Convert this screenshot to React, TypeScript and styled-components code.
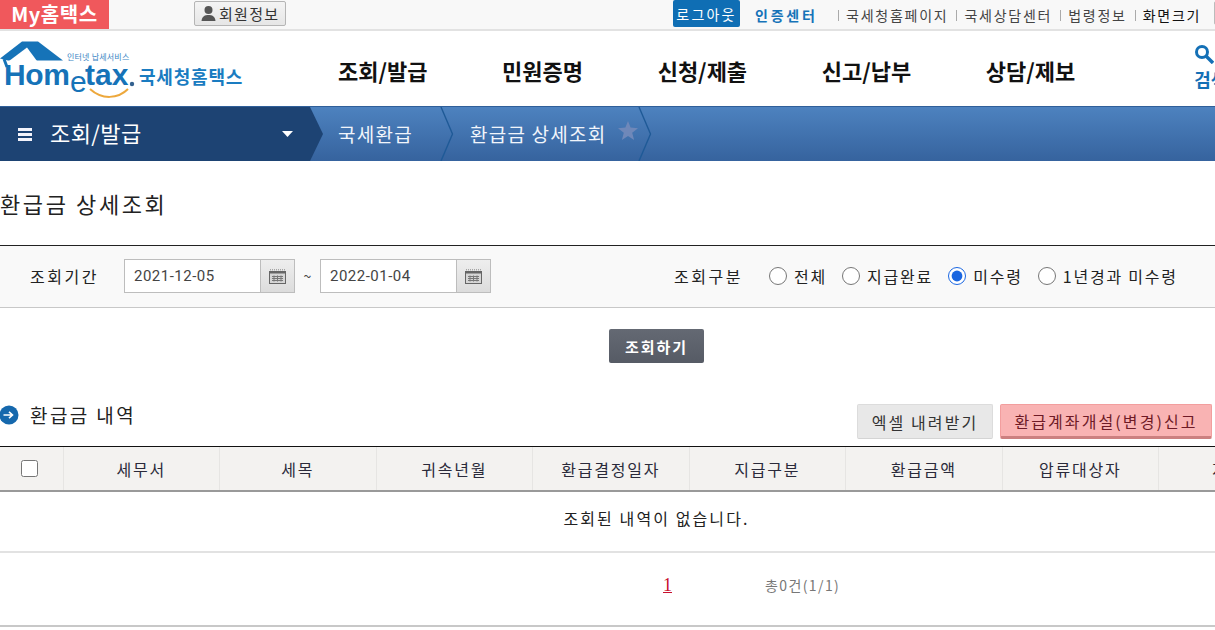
import styled, { createGlobalStyle } from "styled-components";

const GlobalStyle = createGlobalStyle`
  html, body {
    margin: 0;
    padding: 0;
    background: #fff;
    overflow: hidden;
  }
  body {
    font-family: "Noto Sans CJK KR", "Noto Sans", sans-serif;
    color: #222;
  }
  * {
    box-sizing: border-box;
  }
`;

const Viewport = styled.div`
  width: 1215px;
  height: 630px;
  overflow: hidden;
`;

const TopBar = styled.div`
  display: flex;
  align-items: flex-start;
  width: 1313px;
  height: 31px;
  background: #f8f8f8;
  border-bottom: 2px solid #e2e2e2;
`;

const MyHometax = styled.a`
  width: 109px;
  height: 29px;
  background: #f0585c;
  color: #fff;
  font-size: 20px;
  font-weight: 700;
  line-height: 27px;
  text-align: center;
  letter-spacing: 0.6px;
`;

const MemberButton = styled.button`
  display: flex;
  align-items: center;
  gap: 2px;
  width: 92px;
  height: 25px;
  margin: 1px 0 0 85px;
  padding: 0 0 0 5px;
  background: linear-gradient(#f4f4f4, #e6e6e6);
  border: 1px solid #b5b5b5;
  border-radius: 2px;
  color: #333;
  font-family: inherit;
  font-size: 15px;
  letter-spacing: 1.3px;
`;

const LogoutButton = styled.a`
  width: 67px;
  height: 27px;
  margin-left: 387px;
  background: #0f6eb4;
  border-radius: 2px;
  color: #fff;
  font-size: 14px;
  line-height: 28px;
  text-align: center;
  letter-spacing: 2.2px;
  white-space: nowrap;
`;

const CertLink = styled.a`
  width: 62px;
  margin-left: 15px;
  color: #1673b8;
  font-size: 14px;
  font-weight: 700;
  line-height: 30px;
  letter-spacing: 2.8px;
  white-space: nowrap;
`;

const UtilList = styled.div`
  display: flex;
  margin-left: 21px;
`;

const UtilLink = styled.a<{ $dark?: boolean }>`
  display: flex;
  align-items: center;
  height: 30px;
  margin-right: 8px;
  color: ${(p) => (p.$dark ? "#111" : "#444")};
  font-size: 14px;
  letter-spacing: 1.75px;
  white-space: nowrap;

  &::before {
    content: "";
    width: 1px;
    height: 11px;
    margin-right: 7px;
    background: #aaa;
  }
`;

const TopEdgeButton = styled.span`
  width: 20px;
  height: 24px;
  margin: 1px 0 0 5px;
  background: #efefef;
  border: 1px solid #bbb;
  border-radius: 2px;
`;

const Header = styled.header`
  display: flex;
  align-items: center;
  width: 1313px;
  height: 75px;
  background: #fff;
`;

const LogoWrap = styled.a`
  display: flex;
  align-items: center;
  width: 338px;
  height: 75px;
`;

const LogoName = styled.span`
  margin: 14px 0 0 -1px;
  color: #1a7cc1;
  font-size: 18px;
  font-weight: 700;
  letter-spacing: 0.8px;
  white-space: nowrap;
`;

const Menu = styled.nav`
  display: flex;
  gap: 74.6px;
  margin-top: 3px;
`;

const MenuItem = styled.a`
  color: #111;
  font-size: 22px;
  font-weight: 700;
  letter-spacing: 0;
  white-space: nowrap;
`;

const SearchLink = styled.a`
  display: flex;
  flex-direction: column;
  gap: 5px;
  margin: 0 0 5px 119px;
  color: #1470b6;
  font-size: 18px;
  font-weight: 700;
  line-height: 20px;
  white-space: nowrap;
`;

const CrumbBar = styled.div`
  display: flex;
  width: 1313px;
  height: 55px;
  background: linear-gradient(#4d82bf, #36639e);
  border-top: 1px solid #2f5f99;
`;

const CurrentMenu = styled.div`
  display: flex;
  align-items: center;
  width: 323px;
  height: 54px;
  padding-left: 18px;
  background: #1d4373;
  clip-path: polygon(0 0, 310px 0, 323px 50%, 310px 100%, 0 100%);
  color: #fff;
  font-size: 22px;
`;

const MenuLabel = styled.span`
  width: 232px;
  margin: -4px 0 0 18px;
  letter-spacing: 0.4px;
`;

const Crumb = styled.div<{ $pad: number }>`
  display: flex;
  align-items: center;
  padding-left: ${(p) => p.$pad}px;
  color: #f1f5fb;
  font-size: 19px;
  letter-spacing: 1.25px;
  white-space: nowrap;
`;

const CrumbText = styled.span<{ $gap?: number }>`
  margin: -1px ${(p) => p.$gap ?? 0}px 0 0;
`;

const Star = styled.svg`
  margin: -8px 0 0 11px;
  fill: #6f88b9;
`;

const Content = styled.main`
  width: 1313px;
`;

const PageTitle = styled.h1`
  height: 84px;
  margin: 0;
  color: #222;
  font-size: 22px;
  font-weight: 400;
  line-height: 85px;
  letter-spacing: 2.6px;
`;

const SearchPanel = styled.section`
  display: flex;
  align-items: center;
  height: 63px;
  padding: 0 0 1px 30px;
  background: #f9f9f9;
  border-top: 1px solid #222;
  border-bottom: 1px solid #c8c8c8;
`;

const FieldLabel = styled.span<{ $width: number }>`
  width: ${(p) => p.$width}px;
  color: #222;
  font-size: 16px;
  letter-spacing: 2.5px;
  white-space: nowrap;
`;

const DateField = styled.div`
  display: flex;
  height: 34px;
`;

const DateInput = styled.input`
  width: 137px;
  height: 34px;
  padding: 0 0 0 9px;
  background: #fff;
  border: 1px solid #bdbdbd;
  color: #444;
  font-family: "Roboto", "Noto Sans", sans-serif;
  font-size: 15px;
  letter-spacing: 0.5px;
  outline: none;
`;

const CalendarButton = styled.button`
  display: flex;
  align-items: center;
  justify-content: center;
  width: 35px;
  height: 34px;
  margin-left: -1px;
  padding: 0;
  background: linear-gradient(#eeeeee, #dcdcdc);
  border: 1px solid #bdbdbd;
`;

const Tilde = styled.span`
  width: 25px;
  color: #444;
  font-size: 14px;
  text-align: center;
`;

const RadioGroup = styled.div`
  display: flex;
  margin-left: 183px;
`;

const RadioLabel = styled.label`
  display: flex;
  align-items: center;
  margin-right: 15px;
  color: #222;
  font-size: 16px;
  letter-spacing: 1.8px;
  white-space: nowrap;
`;

const RadioInput = styled.input`
  width: 18px;
  height: 18px;
  margin: 0 7px 0 0;
  accent-color: #1a66e0;
`;

const SubmitRow = styled.div`
  display: flex;
  justify-content: center;
  padding-top: 21px;
`;

const SubmitButton = styled.button`
  width: 95px;
  height: 34px;
  padding: 0;
  background: linear-gradient(#646973, #565b65);
  border: 0;
  border-radius: 2px;
  color: #fff;
  font-family: inherit;
  font-size: 15px;
  font-weight: 700;
  letter-spacing: 2px;
`;

const SectionHead = styled.div`
  display: flex;
  align-items: center;
  height: 42px;
  margin-top: 41px;
`;

const SectionTitle = styled.h2`
  display: flex;
  align-items: center;
  width: 857px;
  margin: 0;
  padding-bottom: 21px;
  color: #222;
  font-size: 19px;
  font-weight: 400;
  letter-spacing: 2.4px;
`;

const ActionButton = styled.button<{ $accent?: boolean }>`
  width: ${(p) => (p.$accent ? 212 : 136)}px;
  height: 35px;
  margin: 0 ${(p) => (p.$accent ? 0 : 7)}px 7px 0;
  padding: 0;
  background: ${(p) => (p.$accent ? "#f9b3b3" : "#e8e8e8")};
  border: 1px solid ${(p) => (p.$accent ? "#f29e9e" : "#dcdcdc")};
  border-bottom: ${(p) => (p.$accent ? "3px solid #cc8080" : "1px solid #d4d4d4")};
  border-radius: 2px;
  color: ${(p) => (p.$accent ? "#6e1a26" : "#333")};
  font-family: inherit;
  font-size: 16px;
  letter-spacing: 2.1px;
  white-space: nowrap;
`;

const HeadRow = styled.div`
  display: grid;
  grid-template-columns: 62.5px repeat(8, 156.5px);
  height: 46px;
  background: #f3f2f0;
  border-top: 1px solid #111;
  border-bottom: 2px solid #999;
`;

const HeadCell = styled.div`
  display: flex;
  align-items: center;
  justify-content: center;
  border-left: 1px solid #e6e5e3;
  color: #2a2a3a;
  font-size: 16px;
  letter-spacing: 1.8px;
  white-space: nowrap;

  &:first-child {
    border-left: 0;
  }
`;

const CheckAll = styled.input`
  width: 17px;
  height: 17px;
  margin: 0 3px 0 0;
`;

const EmptyRow = styled.div`
  height: 61px;
  border-bottom: 2px solid #e2e2e2;
  color: #222;
  font-size: 16px;
  line-height: 52px;
  text-align: center;
  letter-spacing: 2.1px;
`;

const Pager = styled.div`
  display: flex;
  align-items: center;
  height: 74px;
  padding: 0 0 8px 663px;
  border-bottom: 2px solid #c8c8c8;
`;

const PageNumber = styled.a`
  color: #c8102e;
  font-family: "Liberation Serif", serif;
  font-size: 18px;
  text-decoration: underline;
`;

const PageTotal = styled.span`
  margin-left: 93px;
  color: #777;
  font-size: 14px;
  letter-spacing: 1.4px;
`;

const headers = ["세무서", "세목", "귀속년월", "환급결정일자", "지급구분", "환급금액", "압류대상자", "지급일"];
const menus = ["조회/발급", "민원증명", "신청/제출", "신고/납부", "상담/제보"];
const radios = [
  { label: "전체" },
  { label: "지급완료" },
  { label: "미수령", checked: true },
  { label: "1년경과 미수령" },
];

function HometaxLogo() {
  return (
    <svg width="140" height="62" viewBox="0 0 140 62" fill="none">
      <path d="M0 20.5 L22 3.5 L38 3.5 L63 22.5 L8 22.5 Z" fill="#1673b8" />
      <path d="M9 23 L27 9.5 L37 23 Z" fill="#fff" />
      <path d="M4 21 L7 29" stroke="#1673b8" strokeWidth="3" />
      <text x="67" y="22" fontSize="8" fontFamily="Noto Sans CJK KR" fill="#3d86c4" letterSpacing="0.2">
        인터넷 납세서비스
      </text>
      <text x="4" y="46.5" fontSize="30" fontWeight="700" fontFamily="Liberation Sans" fill="#1673b8" letterSpacing="-0.4">
        Hom
      </text>
      <text x="70" y="53.5" fontSize="30" fontFamily="Liberation Sans" fill="#1673b8">
        e
      </text>
      <text x="85" y="46.5" fontSize="30" fontWeight="700" fontFamily="Liberation Sans" fill="#1673b8">
        tax
      </text>
      <circle cx="132" cy="46" r="2.2" fill="#33618f" />
      <path d="M90 51 C102 62 118 61 128 51" stroke="#eda83c" strokeWidth="2" />
    </svg>
  );
}

function CrumbChevron() {
  return (
    <svg width="14" height="54" viewBox="0 0 14 54" fill="none">
      <path d="M1 0 L12.5 27 L1 54" stroke="#1f5a97" strokeWidth="1.4" />
    </svg>
  );
}

function CalendarIcon() {
  return (
    <svg width="17" height="15" viewBox="0 0 17 15" fill="none">
      <rect x="0.5" y="2.5" width="16" height="12" fill="#d6d6d6" stroke="#666" />
      <rect x="1" y="2" width="15" height="2.5" fill="#666" />
      <path d="M1 0.8H16" stroke="#888" strokeDasharray="1 1" />
      <path d="M3 7.5H14M3 9.5H14M3 11.5H14M5 6.5V12.5M8.5 6.5V12.5M12 6.5V12.5" stroke="#777" />
    </svg>
  );
}

export default function App() {
  return (
    <Viewport>
      <GlobalStyle />
      <TopBar>
        <MyHometax>My홈택스</MyHometax>
        <MemberButton>
          <svg width="17" height="17" viewBox="0 0 17 17" fill="#555">
            <circle cx="8.5" cy="5" r="4" />
            <path d="M1.5 16 C2 11 5 10 8.5 10 C12 10 15 11 15.5 16 Z" />
          </svg>
          회원정보
        </MemberButton>
        <LogoutButton>로그아웃</LogoutButton>
        <CertLink>인증센터</CertLink>
        <UtilList>
          <UtilLink>국세청홈페이지</UtilLink>
          <UtilLink>국세상담센터</UtilLink>
          <UtilLink>법령정보</UtilLink>
          <UtilLink $dark>화면크기</UtilLink>
        </UtilList>
        <TopEdgeButton />
      </TopBar>

      <Header>
        <LogoWrap>
          <HometaxLogo />
          <LogoName>국세청홈택스</LogoName>
        </LogoWrap>
        <Menu>
          {menus.map((m) => (
            <MenuItem key={m}>{m}</MenuItem>
          ))}
        </Menu>
        <SearchLink>
          <svg width="20" height="20" viewBox="0 0 20 20" fill="none" stroke="#1470b6">
            <circle cx="8" cy="8" r="5.5" strokeWidth="3" />
            <path d="M12 12 L19 19" strokeWidth="3.4" />
          </svg>
          검색
        </SearchLink>
      </Header>

      <CrumbBar>
        <CurrentMenu>
          <svg width="14" height="13" viewBox="0 0 14 13" fill="#f3f3fb">
            <rect y="0" width="14" height="3" />
            <rect y="5" width="14" height="3" />
            <rect y="10" width="14" height="3" />
          </svg>
          <MenuLabel>조회/발급</MenuLabel>
          <svg width="11" height="6" viewBox="0 0 11 6" fill="#fff">
            <path d="M0 0 H11 L5.5 6 Z" />
          </svg>
        </CurrentMenu>
        <Crumb $pad={15}>
          <CrumbText $gap={27}>국세환급</CrumbText>
          <CrumbChevron />
        </Crumb>
        <Crumb $pad={16}>
          <CrumbText>환급금 상세조회</CrumbText>
          <Star width="20" height="19" viewBox="0 0 20 19">
            <path d="M10 0 L12.6 6.6 L20 7.2 L14.2 11.8 L16.1 19 L10 15 L3.9 19 L5.8 11.8 L0 7.2 L7.4 6.6 Z" />
          </Star>
          <CrumbChevron />
        </Crumb>
      </CrumbBar>

      <Content>
        <PageTitle>환급금 상세조회</PageTitle>

        <SearchPanel>
          <FieldLabel $width={94}>조회기간</FieldLabel>
          <DateField>
            <DateInput readOnly value="2021-12-05" />
            <CalendarButton>
              <CalendarIcon />
            </CalendarButton>
          </DateField>
          <Tilde>~</Tilde>
          <DateField>
            <DateInput readOnly value="2022-01-04" />
            <CalendarButton>
              <CalendarIcon />
            </CalendarButton>
          </DateField>
          <RadioGroup>
            <FieldLabel $width={95}>조회구분</FieldLabel>
            {radios.map((r) => (
              <RadioLabel key={r.label}>
                <RadioInput type="radio" name="kind" defaultChecked={r.checked} />
                {r.label}
              </RadioLabel>
            ))}
          </RadioGroup>
        </SearchPanel>

        <SubmitRow>
          <SubmitButton>조회하기</SubmitButton>
        </SubmitRow>

        <SectionHead>
          <SectionTitle>
            <svg width="30" height="20" viewBox="0 0 30 20">
              <circle cx="9" cy="10" r="9.5" fill="#1568ad" />
              <path d="M3.5 10 H12 M9 6.8 L12.5 10 L9 13.2" stroke="#fff" strokeWidth="1.6" fill="none" />
            </svg>
            환급금 내역
          </SectionTitle>
          <ActionButton>엑셀 내려받기</ActionButton>
          <ActionButton $accent>환급계좌개설(변경)신고</ActionButton>
        </SectionHead>

        <HeadRow>
          <HeadCell>
            <CheckAll type="checkbox" />
          </HeadCell>
          {headers.map((h) => (
            <HeadCell key={h}>{h}</HeadCell>
          ))}
        </HeadRow>
        <EmptyRow>조회된 내역이 없습니다.</EmptyRow>
        <Pager>
          <PageNumber>1</PageNumber>
          <PageTotal>총0건(1/1)</PageTotal>
        </Pager>
      </Content>
    </Viewport>
  );
}
